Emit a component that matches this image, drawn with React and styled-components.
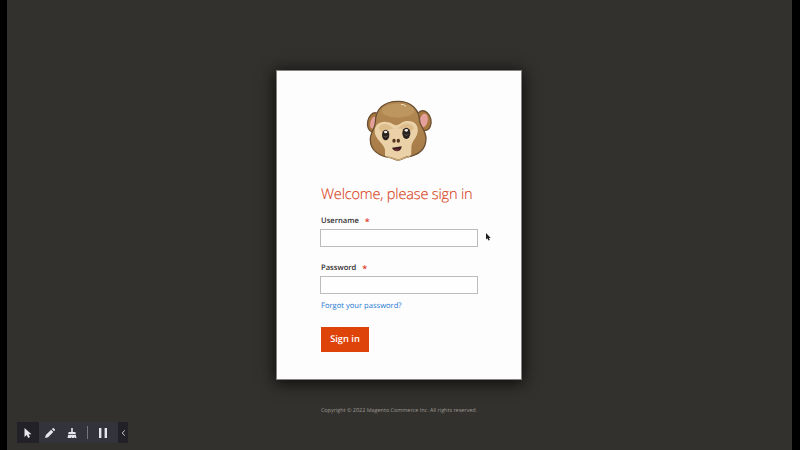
import React from "react";
import styled, { createGlobalStyle } from "styled-components";

const GlobalStyle = createGlobalStyle`
  * { box-sizing: border-box; }
  body { margin: 0; background: #000; font-family: "Open Sans", "Noto Sans", sans-serif; text-rendering: geometricPrecision; }
`;

const Page = styled.div`
  position: relative;
  width: 800px;
  height: 450px;
  overflow: hidden;
  padding: 70px 0 0 269px;
  background: #33312d;
  border: solid #000;
  border-width: 0 8px 0 7px;
`;

const Card = styled.main`
  width: 246px;
  height: 310px;
  padding: 19px 43px 0;
  background: #fefdfe;
  border: 1px solid #85837f;
  box-shadow: 0 2px 15px 1px rgba(0, 0, 0, 0.8);
`;

const Logo = styled.svg`
  display: block;
  width: 90px;
  height: 80px;
  margin: 0 0 0 35px;
`;

const Form = styled.form`
  display: flex;
  flex-direction: column;
  align-items: flex-start;
`;

const Title = styled.h1`
  margin: 15px 0 0 1px;
  height: 20px;
  line-height: 19px;
  font-size: 14.6px;
  letter-spacing: -0.2px;
  font-weight: 300;
  white-space: nowrap;
  color: #d7431b;
  -webkit-text-stroke: 0.15px #d7431b;
`;

const Field = styled.div`
  width: 158px;
  margin-top: ${(p) => p.$gap}px;
`;

const Label = styled.label`
  display: flex;
  gap: 6px;
  height: 14px;
  margin-left: 1px;
  line-height: 14px;
  font-size: 7.6px;
  font-weight: 600;
  color: #303030;
`;

const Required = styled.span`
  color: #e23b2b;
  font-size: 9px;
  line-height: 16px;
`;

const Input = styled.input`
  display: block;
  width: 158px;
  height: 18px;
  margin-top: ${(p) => p.$gap}px;
  padding: 0 5px;
  border: 1px solid #bdbbbc;
  border-radius: 0;
  background: #fefefe;
  font: 7px "Open Sans", sans-serif;
  outline: none;
`;

const ForgotLink = styled.a`
  margin: 5px 0 0 1px;
  height: 14px;
  line-height: 14px;
  font-size: 7.6px;
  white-space: nowrap;
  color: #1979d0;
`;

const SubmitButton = styled.button`
  width: 48px;
  height: 25px;
  margin: 14px 0 0 1px;
  padding: 0 0 2px;
  border: 0;
  background: #de430a;
  color: #fff;
  font: 600 9.3px/23px "Open Sans", sans-serif;
  text-rendering: geometricPrecision;
`;

const Footer = styled.footer`
  width: 246px;
  margin-top: 23px;
  height: 14px;
  line-height: 14px;
  text-align: center;
  white-space: nowrap;
  font-size: 5.45px;
  color: #9d9a94;
`;

const Toolbar = styled.div`
  position: absolute;
  left: 10px;
  top: 422px;
  display: flex;
  align-items: center;
  height: 21px;
  background: #33333b;
  border-radius: 1px;
`;

const Tool = styled.button`
  display: grid;
  place-items: center;
  width: ${(p) => p.$width || 22}px;
  height: 21px;
  margin-left: ${(p) => p.$gap || 0}px;
  padding: 0;
  border: 0;
  border-radius: 1px;
  background: ${(p) => (p.$active ? "#222128" : "transparent")};
`;

const Glyph = styled.svg`
  display: block;
  width: ${(p) => p.$w || 12}px;
  height: 12px;
  fill: #e5e5ec;
`;

const Divider = styled.span`
  width: 1px;
  height: 13px;
  margin: 0 4px;
  background: #77767a;
`;

const Pointer = styled.svg`
  position: absolute;
  left: 478px;
  top: 233px;
  width: 6px;
  height: 8px;
`;

const HEAD =
  "M61 97C61 57 87 34 129 34C169 34 193 59 194 94C195 108 212 119 213 145C213 178 190 196 156 201C144 204 140 210 130 210C120 210 116 205 106 203C72 198 46 181 46 149C45 129 60 116 61 97Z";

function MonkeyLogo() {
  return (
    <Logo viewBox="0 0 270 240" aria-label="Monkey">
      <defs>
        <linearGradient id="fur" x1="0" y1="0" x2="0" y2="1">
          <stop offset="0" stopColor="#b48a54" />
          <stop offset="1" stopColor="#a67a46" />
        </linearGradient>
        <clipPath id="head">
          <path d={HEAD} />
        </clipPath>
      </defs>
      <g stroke="#6b5033" strokeWidth="4">
        <ellipse cx="57" cy="97" rx="19" ry="29" fill="#a8773d" transform="rotate(12 57 97)" />
        <ellipse cx="206" cy="92" rx="22" ry="30" fill="#a8773d" transform="rotate(-12 206 92)" />
      </g>
      <ellipse cx="55" cy="98" rx="9" ry="18" fill="#e5a09c" transform="rotate(15 55 98)" />
      <ellipse cx="206" cy="92" rx="12" ry="21" fill="#e5a09c" transform="rotate(12 206 92)" />
      <g clipPath="url(#head)">
        <rect x="40" y="30" width="180" height="185" fill="url(#fur)" />
        <ellipse cx="129" cy="62" rx="49" ry="21" fill="#bc955f" />
        <path d="M90 215L90 180C89 163 66 152 60 131C55 108 72 93 94 96C109 97 115 105 124 106C134 105 140 94 155 93C180 90 193 108 187 130C184 146 169 154 169 174L168 215Z" fill="#ead1a7" />
        <path d="M70 114C79 99 99 98 111 113Q124 123 136 109C148 96 168 99 178 113L170 123Q125 107 80 126Z" fill="#d5b27d" opacity=".65" />
      </g>
      <path d={HEAD} fill="none" stroke="#6b5033" strokeWidth="4" />
      <path d="M93 200L106 203Q119 208 130 210Q144 205 165 199" fill="none" stroke="#c7a878" strokeWidth="4" />
      <g fill="#28211e">
        <ellipse cx="92" cy="135" rx="11" ry="16" />
        <ellipse cx="154" cy="130" rx="12" ry="17" />
      </g>
      <g fill="#f3eee7">
        <ellipse cx="92" cy="126" rx="5" ry="4" />
        <ellipse cx="154" cy="121" rx="5" ry="4" />
      </g>
      <path d="M86 138Q92 145 98 137M148 133Q155 141 161 132" fill="none" stroke="#77716a" strokeWidth="2" />
      <g fill="#55351f">
        <ellipse cx="117" cy="152" rx="5" ry="6" />
        <ellipse cx="130" cy="152" rx="5" ry="6" />
      </g>
      <path d="M111 173Q126 172 140 169Q139 183 127 184Q115 183 111 173Z" fill="#391b20" />
      <path d="M118 179Q126 175 133 180Q126 187 118 179Z" fill="#7b3239" />
      <path d="M138 43Q148 43 153 49" fill="none" stroke="#f4e1bc" strokeWidth="3" />
    </Logo>
  );
}

function TextField({ label, name, gap, inputGap, type = "text" }) {
  return (
    <Field $gap={gap}>
      <Label htmlFor={name}>{label}<Required>*</Required></Label>
      <Input id={name} type={type} $gap={inputGap} />
    </Field>
  );
}

export default function App() {
  return (
    <>
      <GlobalStyle />
      <Page>
        <Card>
          <MonkeyLogo />
          <Form>
            <Title>Welcome, please sign in</Title>
            <TextField label="Username" name="username" gap={9} inputGap={1} />
            <TextField label="Password" name="password" type="password" gap={14} inputGap={1} />
            <ForgotLink>Forgot your password?</ForgotLink>
            <SubmitButton type="button">Sign in</SubmitButton>
          </Form>
        </Card>
        <Footer>Copyright © 2022 Magento Commerce Inc. All rights reserved.</Footer>
        <Pointer viewBox="0 0 6 8"><path d="M1 0V6.4L2.4 5.2L3.5 7.6L4.8 7L3.9 4.9H5.7Z" fill="#1b1b20" /></Pointer>
        <Toolbar>
          <Tool $active aria-label="Select"><Glyph viewBox="0 0 12 12"><path d="M2.5 1V10L4.7 8L6.2 11L8 10L6.6 7.3H9.5Z" /></Glyph></Tool>
          <Tool aria-label="Draw"><Glyph viewBox="0 0 12 12"><path d="M1 11L1.8 7.9L7.1 2.8L9.3 5L4.1 10.2ZM7.8 2.1L8.8 1.2Q9.4.8 10 1.4L10.8 2.2Q11.3 2.8 10.8 3.4L10 4.3Z" /></Glyph></Tool>
          <Tool aria-label="Clear"><Glyph viewBox="0 0 12 12"><path d="M5.2 1H6.8V5H9Q9.7 5 9.7 6V7H2.3V6Q2.3 5 3 5H5.2ZM2.2 7.7H9.8L10.5 11H8.5V9.5L7.8 11H6V9.5L5.2 11H1.5Z" /></Glyph></Tool>
          <Divider />
          <Tool aria-label="Pause"><Glyph viewBox="0 0 12 12"><path d="M2 1H4.4V11H2ZM7.6 1H10V11H7.6Z" /></Glyph></Tool>
          <Tool $active $width={10} $gap={4} aria-label="Collapse"><Glyph $w={9} viewBox="0 0 9 12"><path d="M5.7 3.3L3.3 6L5.7 8.7" fill="none" stroke="#c7c6cc" /></Glyph></Tool>
        </Toolbar>
      </Page>
    </>
  );
}
